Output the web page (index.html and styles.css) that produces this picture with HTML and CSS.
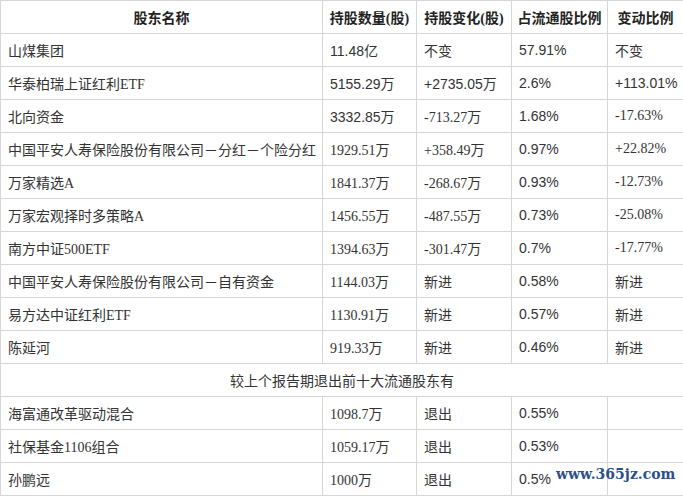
FILE: index.html
```html
<!DOCTYPE html>
<html lang="zh-CN">
<head>
<meta charset="utf-8">
<title>十大流通股东</title>
<link rel="stylesheet" href="styles.css">
</head>
<body>
<div class="wrap">
<table class="holders">
<colgroup>
<col class="c-name"><col class="c-qty"><col class="c-chg"><col class="c-ratio"><col class="c-var">
</colgroup>
<thead>
<tr><th>股东名称</th><th>持股数量(股)</th><th>持股变化(股)</th><th>占流通股比例</th><th>变动比例</th></tr>
</thead>
<tbody>
<tr><td>山煤集团</td><td class="sans">11.48亿</td><td>不变</td><td class="sans">57.91%</td><td>不变</td></tr>
<tr><td>华泰柏瑞上证红利ETF</td><td class="sans">5155.29万</td><td class="sans">+2735.05万</td><td class="sans">2.6%</td><td class="sans">+113.01%</td></tr>
<tr><td>北向资金</td><td class="sans">3332.85万</td><td>-713.27万</td><td class="sans">1.68%</td><td>-17.63%</td></tr>
<tr><td>中国平安人寿保险股份有限公司－分红－个险分红</td><td>1929.51万</td><td>+358.49万</td><td class="sans">0.97%</td><td>+22.82%</td></tr>
<tr><td>万家精选A</td><td>1841.37万</td><td>-268.67万</td><td class="sans">0.93%</td><td>-12.73%</td></tr>
<tr><td>万家宏观择时多策略A</td><td>1456.55万</td><td>-487.55万</td><td class="sans">0.73%</td><td>-25.08%</td></tr>
<tr><td>南方中证500ETF</td><td>1394.63万</td><td>-301.47万</td><td class="sans">0.7%</td><td>-17.77%</td></tr>
<tr><td>中国平安人寿保险股份有限公司－自有资金</td><td>1144.03万</td><td>新进</td><td class="sans">0.58%</td><td>新进</td></tr>
<tr><td>易方达中证红利ETF</td><td>1130.91万</td><td>新进</td><td class="sans">0.57%</td><td>新进</td></tr>
<tr><td>陈延河</td><td>919.33万</td><td>新进</td><td class="sans">0.46%</td><td>新进</td></tr>
<tr><td class="merged" colspan="5">较上个报告期退出前十大流通股东有</td></tr>
<tr><td>海富通改革驱动混合</td><td>1098.7万</td><td>退出</td><td class="sans">0.55%</td><td></td></tr>
<tr><td>社保基金1106组合</td><td>1059.17万</td><td>退出</td><td class="sans">0.53%</td><td></td></tr>
<tr><td>孙鹏远</td><td>1000万</td><td>退出</td><td class="sans">0.5%</td><td></td></tr>
</tbody>
</table>
<div class="watermark">www.365jz.com</div>
</div>
</body>
</html>
```

FILE: styles.css
```css
html, body {
  margin: 0;
  padding: 0;
  background: #ffffff;
}
.wrap {
  position: relative;
  width: 683px;
  height: 496px;
  overflow: hidden;
}
.holders {
  width: 683px;
  table-layout: fixed;
  border-collapse: collapse;
  font-family: "Liberation Serif", "Noto Sans CJK SC", serif;
  font-size: 14px;
  color: #333333;
}
.c-name { width: 322px; }
.c-qty { width: 94px; }
.c-chg { width: 95px; }
.c-ratio { width: 96px; }
.c-var { width: 76px; }
.holders th,
.holders td {
  border: 1px solid #d6d6d6;
  height: 32px;
  padding: 0 0 0 7px;
  text-align: left;
  white-space: nowrap;
  font-weight: normal;
}
.holders th {
  text-align: center;
  padding: 0;
  font-weight: bold;
  color: #222222;
}
.holders td.sans {
  font-family: "Liberation Sans", "Noto Sans CJK SC", sans-serif;
}
.holders td.merged {
  text-align: center;
  padding: 0;
}
.watermark {
  position: absolute;
  left: 556px;
  top: 466px;
  font-family: "DejaVu Serif", serif;
  font-weight: bold;
  font-size: 14px;
  color: #2d4f8a;
  letter-spacing: 0;
}
```
